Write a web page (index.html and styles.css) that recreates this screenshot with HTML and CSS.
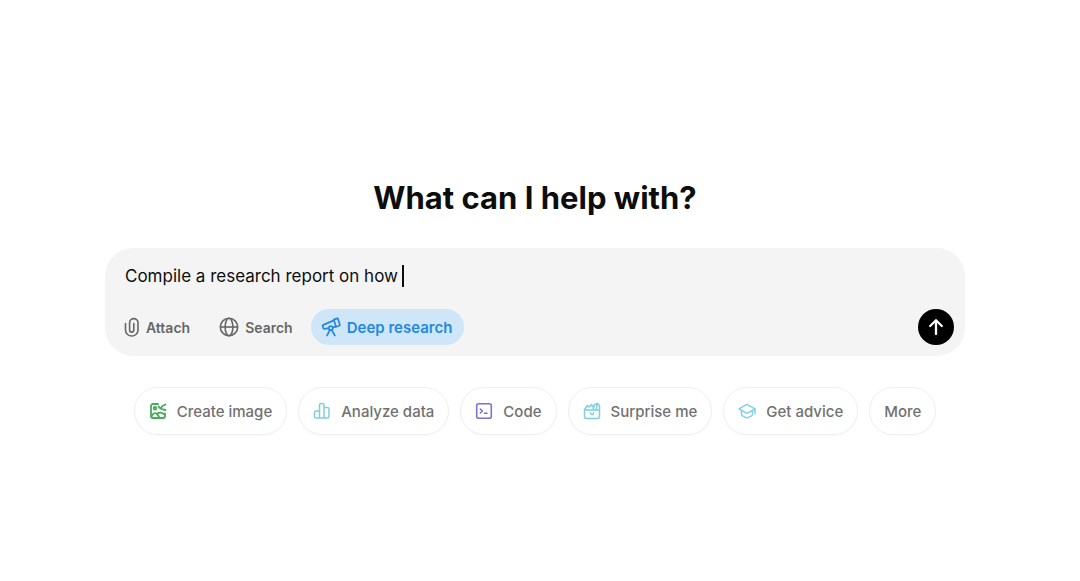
FILE: index.html
```html
<!DOCTYPE html>
<html lang="en">
<head>
<meta charset="utf-8">
<meta name="viewport" content="width=device-width, initial-scale=1">
<title>What can I help with?</title>
<link rel="stylesheet" href="styles.css">
</head>
<body>
<main class="home">
  <h1 class="title">What can I help with?</h1>
  <form class="composer">
    <div class="prompt">
      <input class="prompt-input" type="text" aria-label="Message" value="Compile a research report on how">
      <span class="caret"></span>
    </div>
    <div class="toolbar">
      <button class="tool tool-attach" type="button">
        <svg class="icon icon-clip" viewBox="0 0 16 20" fill="none" stroke="currentColor" stroke-width="1.6" stroke-linecap="round"><path d="M1.500 6.500v6.500a6 5.800 0 0 0 12.500 0V5.800a4.200 4.200 0 0 0-8.400 0V13a2.100 2.100 0 0 0 4.200 0V6.500"/></svg>
        Attach
      </button>
      <button class="tool tool-search" type="button">
        <svg class="icon" viewBox="0 0 20 20" fill="none" stroke="currentColor" stroke-width="1.600"><circle cx="10" cy="10" r="8.700"/><ellipse cx="10" cy="10" rx="3.900" ry="8.700"/><path d="M1.300 10h17.400"/></svg>
        Search
      </button>
      <button class="tool tool-active" type="button" aria-pressed="true">
        <svg class="icon" viewBox="0 0 20 20" fill="none" stroke="currentColor" stroke-width="1.700" stroke-linejoin="round" stroke-linecap="round"><path d="M12.800 2.600l3.200-1.200a.8.8 0 0 1 1 .5l1.800 5.800a.8.8 0 0 1-.5 1L15 9.700z"/><path d="M13 3.400L2.300 7.900a1 1 0 0 0-.6 1.300l.7 2a1 1 0 0 0 1.200.6l3.900-.6M12 10.300l3-.6"/><circle cx="9.800" cy="11.200" r="2"/><path d="M8.900 13.200L6 18.500M10.800 13.200l3 5.300"/></svg>
        Deep research
      </button>
      <button class="send" type="submit" aria-label="Send">
        <svg class="send-icon" viewBox="0 0 18 18" fill="none" stroke="currentColor" stroke-width="2.300" stroke-linecap="round" stroke-linejoin="round"><path d="M9 16V2.500M3.200 8L9 2.200 14.800 8"/></svg>
      </button>
    </div>
  </form>
  <div class="chips">
    <button class="chip" type="button">
      <svg class="chip-icon green" viewBox="0 0 18 18" fill="none" stroke="currentColor" stroke-width="1.800" stroke-linecap="round" stroke-linejoin="round"><path d="M9 2H4a2 2 0 0 0-2 2v10a2 2 0 0 0 2 2h10a2 2 0 0 0 2-2v-2.500"/><circle cx="6" cy="6.300" r="1.300"/><path d="M2.500 14.500c1-3 3.500-4.300 5.500-2.500 1.200 1.200 2 2.500 2.500 4M8.500 11.500c2-1.500 4.500-1 7 1M16.500 2.500l-3 1.500-2 2.500 2.500 1 2.500.5M11.500 6.500L9.500 4.500"/></svg>
      Create image
    </button>
    <button class="chip" type="button">
      <svg class="chip-icon teal" viewBox="0 0 18 18" fill="none" stroke="currentColor" stroke-width="1.500" stroke-linejoin="round"><path d="M6.500 16H3a1.500 1.500 0 0 1-1.500-1.500v-4A1.500 1.500 0 0 1 3 9h3.500M6.500 16V3A1.500 1.500 0 0 1 8 1.500h1.500A1.500 1.500 0 0 1 11 3v13zM11 5.500h3.500A1.500 1.500 0 0 1 16 7v7.500a1.500 1.500 0 0 1-1.500 1.500H11"/></svg>
      Analyze data
    </button>
    <button class="chip" type="button">
      <svg class="chip-icon violet" viewBox="0 0 18 18" fill="none" stroke="currentColor" stroke-width="1.600" stroke-linecap="round" stroke-linejoin="round"><rect x="1.700" y="1.700" width="14.600" height="14.600" rx="2"/><path d="M5.300 7l2 2-2 2M9.500 11.200h2.500"/></svg>
      Code
    </button>
    <button class="chip" type="button">
      <svg class="chip-icon teal" viewBox="0 0 18 18" fill="none" stroke="currentColor" stroke-width="1.500" stroke-linecap="round" stroke-linejoin="round"><path d="M1.500 8h15v6.500a2 2 0 0 1-2 2h-11a2 2 0 0 1-2-2zM1.500 8l2.700-4.500L6.500 5l2-2.500L10 5M16.500 8V3.500l-2-2-3 1L10 8M14.500 1.500L13 8M7.300 10.800a1.700 1.700 0 0 0 3.400 0"/></svg>
      Surprise me
    </button>
    <button class="chip" type="button">
      <svg class="chip-icon cyan" viewBox="0 0 18 18" fill="none" stroke="currentColor" stroke-width="1.500" stroke-linecap="round" stroke-linejoin="round"><path d="M1 6.800L8 2.800a2 2 0 0 1 2 0l7 4-7 4a2 2 0 0 1-2 0zM3.500 8.500v3.700a2 2 0 0 0 1 1.700L8 15.700a2 2 0 0 0 2 0l3.500-1.800a2 2 0 0 0 1-1.700V8.500M17 6.800v5"/></svg>
      Get advice
    </button>
    <button class="chip" type="button">More</button>
  </div>
</main>
</body>
</html>
```
FILE: styles.css
```css
* {
  box-sizing: border-box;
}

body {
  margin: 0;
  background: #fff;
  font-family: Inter, "Liberation Sans", sans-serif;
  color: #0d0d0d;
}

button,
input {
  font: inherit;
  color: inherit;
  margin: 0;
  padding: 0;
  border: 0;
  background: none;
}

.home {
  display: flex;
  flex-direction: column;
  align-items: center;
  padding: 178px 20px 40px 10px;
}

.title {
  margin: 0 0 30px;
  font-size: 31px;
  line-height: 40px;
  font-weight: 700;
}

.composer {
  width: 100%;
  max-width: 860px;
  padding: 16px 11px 11px 12px;
  border-radius: 28px;
  background: #f4f4f4;
}

.prompt {
  display: flex;
  align-items: center;
  gap: 4px;
  padding-left: 8px;
}

.prompt-input {
  field-sizing: content;
  height: 24px;
  font-size: 17px;
  line-height: 24px;
  outline: none;
}

.caret {
  width: 2px;
  height: 22px;
  background: #0d0d0d;
}

.toolbar {
  display: flex;
  align-items: center;
  margin-top: 21px;
}

.tool {
  display: flex;
  align-items: center;
  gap: 6px;
  height: 36px;
  border-radius: 18px;
  font-size: 14px;
  font-weight: 600;
  color: #676767;
}

.tool-attach {
  padding: 0 14px 0 7px;
}

.tool-search {
  padding: 0 18px 0 15px;
}

.tool-active {
  padding: 0 12px 0 10px;
  background: #cfe6f9;
  font-size: 15px;
  color: #2388e0;
}

.icon {
  width: 20px;
  height: 20px;
}

.icon-clip {
  width: 16px;
}

.send {
  display: grid;
  place-items: center;
  width: 36px;
  height: 36px;
  margin-left: auto;
  border-radius: 50%;
  background: #000;
  color: #fff;
}

.send-icon {
  width: 18px;
  height: 18px;
}

.chips {
  display: flex;
  flex-wrap: wrap;
  justify-content: center;
  gap: 11px;
  margin-top: 31px;
}

.chip {
  display: flex;
  align-items: center;
  gap: 10px;
  height: 48px;
  padding: 0 14px;
  border: 1px solid #efefef;
  border-radius: 24px;
  box-shadow: 0 1px 2px #00000008;
  font-size: 15px;
  font-weight: 500;
  color: #717171;
}

.chip-icon {
  width: 18px;
  height: 18px;
}

.green {
  color: #48ab5c;
}

.teal {
  color: #7fd0da;
}

.violet {
  color: #7d70d0;
}

.cyan {
  color: #7fd0e4;
}
```
